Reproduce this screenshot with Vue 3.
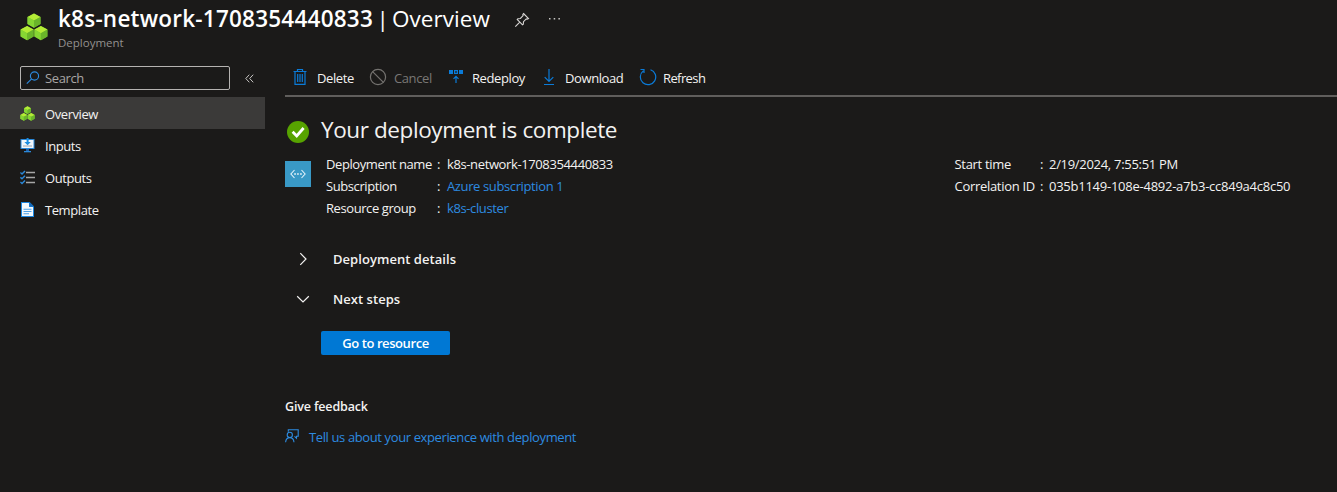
<script setup>
const nav = ['Overview', 'Inputs', 'Outputs', 'Template']
const left = [
  { label: 'Deployment name', value: 'k8s-network-1708354440833', cls: 'v-name' },
  { label: 'Subscription', value: 'Azure subscription 1', cls: 'link' },
  { label: 'Resource group', value: 'k8s-cluster', cls: 'link' },
]
const right = [
  { label: 'Start time', value: '2/19/2024, 7:55:51 PM', cls: 'v-time' },
  { label: 'Correlation ID', value: '035b1149-108e-4892-a7b3-cc849a4c8c50', cls: 'v-id' },
]
</script>

<template>
  <div class="page">
    <svg class="defs" width="0" height="0">
      <symbol id="cubes" viewBox="0 0 28 28">
        <g id="cube">
          <path d="M14 .5 20.5 4v7L14 14.7 7.5 11V4z" fill="#76bc2d" />
          <path d="M14 .5 20.5 4 14 7.6 7.5 4z" fill="#b4ec36" />
          <path d="M7.5 4 14 7.6v7.1L7.5 11z" fill="#86d633" />
          <path d="M20.5 4 14 7.6v7.1l6.5-3.7z" fill="#6ab52a" />
        </g>
        <use href="#cube" x="-6.9" y="12.6" />
        <use href="#cube" x="6.9" y="12.6" />
      </symbol>
    </svg>

    <header class="header">
      <svg class="logo" width="28" height="28"><use href="#cubes" /></svg>
      <div class="titles">
        <h1><b>k8s-network-1708354440833</b><span class="bar">|</span><span class="ov">Overview</span></h1>
        <div class="kind">Deployment</div>
      </div>
      <svg class="pin" width="16" height="16" viewBox="0 0 16 16" fill="none" stroke="#d8d6d4" stroke-width="1.1">
        <path d="M9.5 1.500 14.500 6.500 13.200 7.200 12.300 6.900 9.500 9.700 9.300 12.300 8.500 12.800 3.200 7.500 3.900 6.700 6.400 6.500 9.100 3.700 8.800 2.500zM5.800 10.200 1.300 14.700" />
      </svg>
      <svg class="dots" width="13" height="4" viewBox="0 0 13 4" fill="#c8c6c4"><path d="M1 1h1.500v1.500H1zM5.700 1h1.500v1.500H5.700zM10.400 1h1.500v1.500h-1.500z" /></svg>
    </header>

    <div class="body">
      <aside class="side">
        <div class="searchrow">
          <div class="search">
            <svg width="14" height="14" viewBox="0 0 14 14" fill="none" stroke="#2d8be0" stroke-width="1.150"><circle cx="8.500" cy="5" r="4.100" /><path d="M5.600 7.900.8 12.700" /></svg>
            <span>Search</span>
          </div>
          <svg class="collapse" width="9" height="9" viewBox="0 0 9 9" fill="none" stroke="#c8c6c4"><path d="M4.300.7.800 4.500l3.500 3.800M8.200.7 4.700 4.500l3.500 3.800" /></svg>
        </div>
        <nav>
          <div v-for="(n, i) in nav" :key="n" class="item" :class="{ active: i === 0 }">
            <svg v-if="i === 0" width="15" height="15"><use href="#cubes" /></svg>
            <svg v-else-if="i === 1" width="15" height="15" viewBox="0 0 15 15">
              <path d="M.5 1h14v10H.5z" fill="#2b88d8" /><path d="M1.500 2h12v8h-12z" fill="#f0f6fb" />
              <path d="M6.600 0h2v4h2.200L7.600 7.300 4.400 4h2.200z" fill="#1a8de0" /><path d="M3 7.500h9v1H3z" fill="#9aa5ae" />
              <path d="M6 11h3v2H6z" fill="#1f5fa8" /><path d="M4 13h7v1.300H4z" fill="#2b88d8" />
            </svg>
            <svg v-else-if="i === 2" width="15" height="15" viewBox="0 0 15 15" fill="none">
              <path d="M6 2.500h9M6 7.500h9M6 12.500h9" stroke="#a6a6a6" stroke-width="1.500" />
              <path d="M.4 2.500 2 4 5 .9M.4 7.300 2 8.800 5 5.700M.4 12 2 13.500 5 10.400" stroke="#2b88d8" stroke-width="1.400" />
            </svg>
            <svg v-else width="15" height="15" viewBox="0 0 15 15">
              <path d="M1 0h8.500L14 4.500V15H1z" fill="#1b86e0" /><path d="M2 1h7v4h4v9H2z" fill="#f2f8fd" />
              <path d="M9.500 0 14 4.500H9.500z" fill="#1468b8" /><path d="M3.500 6.700h8v1h-8zM3.500 9h8v1h-8zM3.500 11.200H9v1H3.500z" fill="#4ba0e8" />
            </svg>
            <span>{{ n }}</span>
          </div>
        </nav>
      </aside>

      <main class="main">
        <div class="toolbar">
          <div class="tool delete">
            <svg width="16" height="18" viewBox="0 0 16 18" fill="none" stroke="#0b7bd8" stroke-width="1.200"><path d="M1.500 3.500h13M5.500 3.500v-2h5v2M3 3.500v12.900h10V3.500M5.700 6v8M8 6v8M10.300 6v8" /></svg>
            <span>Delete</span>
          </div>
          <div class="tool cancel">
            <svg width="18" height="18" viewBox="0 0 18 18" fill="none" stroke="#74726f" stroke-width="1.200"><circle cx="9" cy="9" r="7.600" /><path d="M3.600 3.600 14.400 14.400" /></svg>
            <span>Cancel</span>
          </div>
          <div class="tool redeploy">
            <svg width="16" height="16" viewBox="0 0 16 16" fill="none" stroke="#0b7bd8"><path d="M1 1h4v4H1zM11 1h4v4h-4z" fill="#0b7bd8" stroke="none" /><path d="M6.600 1.600h2.800v2.800H6.600z" stroke-width="1.200" /><path d="M8 14V7.500M5.500 9.800 8 7.300l2.500 2.500" stroke-width="1.200" /></svg>
            <span>Redeploy</span>
          </div>
          <div class="tool download">
            <svg width="12" height="18" viewBox="0 0 12 18" fill="none" stroke="#0b7bd8" stroke-width="1.200"><path d="M6 1v12.500M1.700 9.200 6 13.500l4.300-4.300M1 16.500h10" /></svg>
            <span>Download</span>
          </div>
          <div class="tool refresh">
            <svg width="18" height="18" viewBox="0 0 18 18" fill="none" stroke="#0b7bd8" stroke-width="1.200"><path d="M11.500 1.700A7.700 7.700 0 1 1 4.300 2.900M1.500 1.500H5V5" /></svg>
            <span>Refresh</span>
          </div>
        </div>

        <div class="status">
          <svg width="22" height="22" viewBox="0 0 22 22"><circle cx="11" cy="11" r="11" fill="#57a300" /><path d="M5.600 10.800 9.700 14.900 16.600 7" fill="none" stroke="#fff" stroke-width="2.800" /></svg>
          <h2>Your deployment is complete</h2>
        </div>

        <div class="info">
          <div class="rtype">
            <svg width="16" height="10" viewBox="0 0 16 10" fill="none" stroke="#e4f3fb" stroke-width="1.100"><path d="M4.500 1 .9 5l3.600 4M11.500 1l3.600 4-3.600 4" /><path d="M4.300 4.300h1.500v1.500H4.300zM7.200 4.300h1.500v1.500H7.200zM10.200 4.300h1.500v1.500h-1.500z" fill="#fff" stroke="none" /></svg>
          </div>
          <dl class="left">
            <div v-for="r in left" :key="r.label" class="row"><dt>{{ r.label }}</dt><i>:</i><dd :class="r.cls">{{ r.value }}</dd></div>
          </dl>
          <dl class="right">
            <div v-for="r in right" :key="r.label" class="row"><dt>{{ r.label }}</dt><i>:</i><dd :class="r.cls">{{ r.value }}</dd></div>
          </dl>
        </div>

        <section class="sections">
          <div class="section">
            <svg width="14" height="14" viewBox="0 0 14 14" fill="none" stroke="#f3f2f1" stroke-width="1.200"><path d="M4.300 1.200 10 7l-5.700 5.800" /></svg>
            <h3 class="dd">Deployment details</h3>
          </div>
          <div class="section">
            <svg width="14" height="14" viewBox="0 0 14 14" fill="none" stroke="#f3f2f1" stroke-width="1.200"><path d="M1.200 4.300 7 10l5.800-5.700" /></svg>
            <h3 class="ns">Next steps</h3>
          </div>
        </section>
        <button class="go">Go to resource</button>

        <h4>Give feedback</h4>
        <a class="feedback">
          <svg width="14" height="14" viewBox="0 0 14 14" fill="none" stroke="#2d8be0" stroke-width="1.100"><path d="M3.300 2.800V.8h9.900v6.500h-1.700v2L9.500 7.400" /><circle cx="4.800" cy="5.900" r="2.600" /><path d="M.6 13.200c.3-2.900 1.900-4.600 4.200-4.600s3.900 1.700 4.200 4.600" /></svg>
          <span>Tell us about your experience with deployment</span>
        </a>
      </main>
    </div>
  </div>
</template>

<style>
body { background: #1b1a19; }
</style>

<style scoped>
* { box-sizing: border-box; margin: 0; padding: 0; }
.page { width: 1337px; height: 492px; overflow: hidden; background: #1b1a19; color: #f3f2f1; font: 13px/20px "Open Sans", "Noto Sans", sans-serif; letter-spacing: -.38px; white-space: nowrap; }
.defs { position: absolute; }
svg { display: block; flex: none; }
.header { display: flex; height: 66px; padding-left: 20px; }
.logo { margin-top: 13px; }
.titles { width: 432px; margin-left: 10px; }
h1 { display: flex; height: 34px; margin-top: 2px; font-size: 22.5px; line-height: 34px; font-weight: 400; color: #fff; letter-spacing: .05px; }
h1 b { width: 319px; font-weight: 600; letter-spacing: .23px; }
h1 .bar { width: 15.500px; }
.kind { font-size: 11.5px; line-height: 14px; color: #93918f; letter-spacing: 0; }
.pin { margin: 12px 0 0 24px; }
.dots { margin: 17px 0 0 18px; }
.body { display: flex; }
.side { width: 265px; }
.searchrow { display: flex; align-items: center; padding-left: 20px; }
.search { display: flex; align-items: center; width: 210px; height: 24px; padding-left: 5px; border: 1px solid #b5b3b1; border-radius: 2px; color: #a8a6a4; }
.search span { margin-left: 5px; }
.collapse { margin-left: 15px; }
nav { margin-top: 7px; }
.item { display: flex; align-items: center; height: 32px; padding: 2px 0 0 20px; letter-spacing: -.42px; }
.item svg { margin-top: -2px; }
.item span { margin-left: 10px; }
.active { background: #3b3a39; }
.main { flex: 1; padding-left: 20px; }
.toolbar { display: flex; height: 31px; border-bottom: 2px solid #605e5c; padding-left: 7px; letter-spacing: -.4px; }
.tool { display: flex; height: 24px; }
.tool span { margin-top: 2px; }
.delete { width: 77px; }
.delete svg { margin: 2px 9px 0 0; }
.cancel { width: 79px; color: #797775; }
.cancel svg { margin: 2px 7px 0 0; }
.redeploy { width: 95px; }
.redeploy svg { margin: 3px 8px 0 0; }
.download { width: 96px; }
.download svg { margin: 2px 10px 0 0; }
.refresh { letter-spacing: -.6px; }
.refresh svg { margin: 2px 6px 0 0; }
.status { display: flex; height: 56px; padding: 18px 0 0 2px; }
.status svg { margin-top: 6px; }
h2 { margin: 0 0 0 12px; font-size: 22.5px; line-height: 30px; font-weight: 400; letter-spacing: -.4px; }
.info { display: flex; height: 86px; }
.rtype { display: flex; align-items: center; justify-content: center; width: 26px; height: 26px; margin: 8px 15px 0 0; background: #3999c6; }
.left { width: 628.500px; }
.row { display: flex; height: 22px; line-height: 22px; }
dt { width: 111px; }
.left dt { letter-spacing: -.42px; }
.right dt { width: 85.500px; letter-spacing: -.3px; }
i { width: 10px; font-style: normal; }
.right i { width: 9px; }
.v-time { letter-spacing: -.3px; }
.v-id { letter-spacing: -.25px; }
.link, .feedback { color: #2d8be0; }
.section { display: flex; align-items: center; height: 40px; padding-left: 11px; }
h3, h4 { font-size: 13px; font-weight: 600; letter-spacing: .05px; }
h3 { margin-left: 23px; }
.go { display: block; width: 129px; height: 24px; margin: 12px 0 0 36px; border: 0; border-radius: 2px; background: #0078d4; color: #fff; font: 600 13px/25px "Open Sans", sans-serif; letter-spacing: -.42px; }
h4 { margin-top: 42px; font-size: 12.5px; letter-spacing: -.15px; }
.feedback { display: flex; margin-top: 10px; }
.feedback svg { margin-top: 2px; }
.feedback span { margin-left: 10px; }
</style>
